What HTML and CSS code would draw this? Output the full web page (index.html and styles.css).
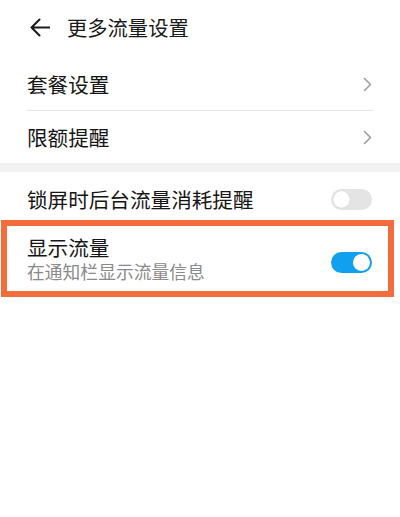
FILE: index.html
```html
<!DOCTYPE html>
<html lang="zh-CN">
<head>
<meta charset="utf-8">
<title>更多流量设置</title>
<link rel="stylesheet" href="styles.css">
</head>
<body>
<div class="page">
  <header class="header">
    <svg class="back" width="20" height="19" viewBox="0 0 20 19">
      <path d="M19.5 9.5H1.5M9.5 1.5L1.5 9.5L9.5 17.5" fill="none" stroke="#1a1a1a" stroke-width="2" stroke-linecap="round" stroke-linejoin="round"/>
    </svg>
    <span class="title">更多流量设置</span>
  </header>

  <div class="group">
    <div class="row">
      <span class="label">套餐设置</span>
      <svg class="chev" width="9" height="15" viewBox="0 0 9 15"><path d="M1.5 1.5L7.5 7.5L1.5 13.5" fill="none" stroke="#9a9a9a" stroke-width="1.5" stroke-linecap="round" stroke-linejoin="round"/></svg>
    </div>
    <div class="divider"></div>
    <div class="row">
      <span class="label">限额提醒</span>
      <svg class="chev" width="9" height="15" viewBox="0 0 9 15"><path d="M1.5 1.5L7.5 7.5L1.5 13.5" fill="none" stroke="#9a9a9a" stroke-width="1.5" stroke-linecap="round" stroke-linejoin="round"/></svg>
    </div>
  </div>

  <div class="band"></div>

  <div class="row row-lock">
    <span class="label">锁屏时后台流量消耗提醒</span>
    <span class="toggle"><span class="knob"></span></span>
  </div>

  <div class="highlight">
    <div class="texts">
      <span class="label">显示流量</span>
      <span class="sub">在通知栏显示流量信息</span>
    </div>
    <span class="toggle on"><span class="knob"></span></span>
  </div>
</div>
</body>
</html>
```

FILE: styles.css
```css
html, body {
  margin: 0;
  padding: 0;
  background: #ffffff;
}
body {
  font-family: "Noto Sans CJK SC", "Noto Sans", sans-serif;
  color: #1a1a1a;
}
.page {
  width: 400px;
  height: 517px;
  background: #fff;
}
.header {
  height: 58px;
  display: flex;
  align-items: center;
  padding-left: 30px;
  box-sizing: border-box;
  padding-bottom: 4px;
}
.back {
  display: block;
}
.title {
  margin-left: 17px;
  font-size: 20.3px;
  line-height: 24px;
}
.group {
  padding-left: 27px;
  padding-right: 26px;
}
.row {
  height: 52px;
  display: flex;
  align-items: center;
  justify-content: space-between;
}
.label {
  font-size: 20.6px;
  line-height: 24px;
  color: #161616;
}
.chev {
  display: block;
  margin-right: 2px;
}
.divider {
  height: 1px;
  background: #e6e6e6;
}
.band {
  height: 9px;
  background: #f1f1f1;
}
.row-lock {
  height: 48px;
  box-sizing: border-box;
  padding: 6px 28px 0 27px;
}
.toggle {
  position: relative;
  width: 41px;
  height: 21px;
  border-radius: 11px;
  background: #e4e4e4;
  flex-shrink: 0;
}
.toggle .knob {
  position: absolute;
  left: 2px;
  top: 2px;
  width: 17px;
  height: 17px;
  border-radius: 50%;
  background: #fff;
  box-shadow: 0 0 1px rgba(0,0,0,0.25);
}
.toggle.on {
  background: #11a0ef;
}
.toggle.on .knob {
  left: auto;
  right: 2px;
  box-shadow: none;
}
.highlight {
  margin-left: 1px;
  width: 393px;
  height: 77px;
  box-sizing: border-box;
  border: 6px solid #f36d3c;
  display: flex;
  align-items: center;
  justify-content: space-between;
  padding: 0 16px 0 20px;
}
.texts {
  display: flex;
  flex-direction: column;
  padding-top: 1px;
}
.sub {
  font-size: 17.8px;
  line-height: 23px;
  color: #8a8a8a;
  margin-top: 1px;
}
.highlight .toggle {
  margin-top: 8px;
}
```
